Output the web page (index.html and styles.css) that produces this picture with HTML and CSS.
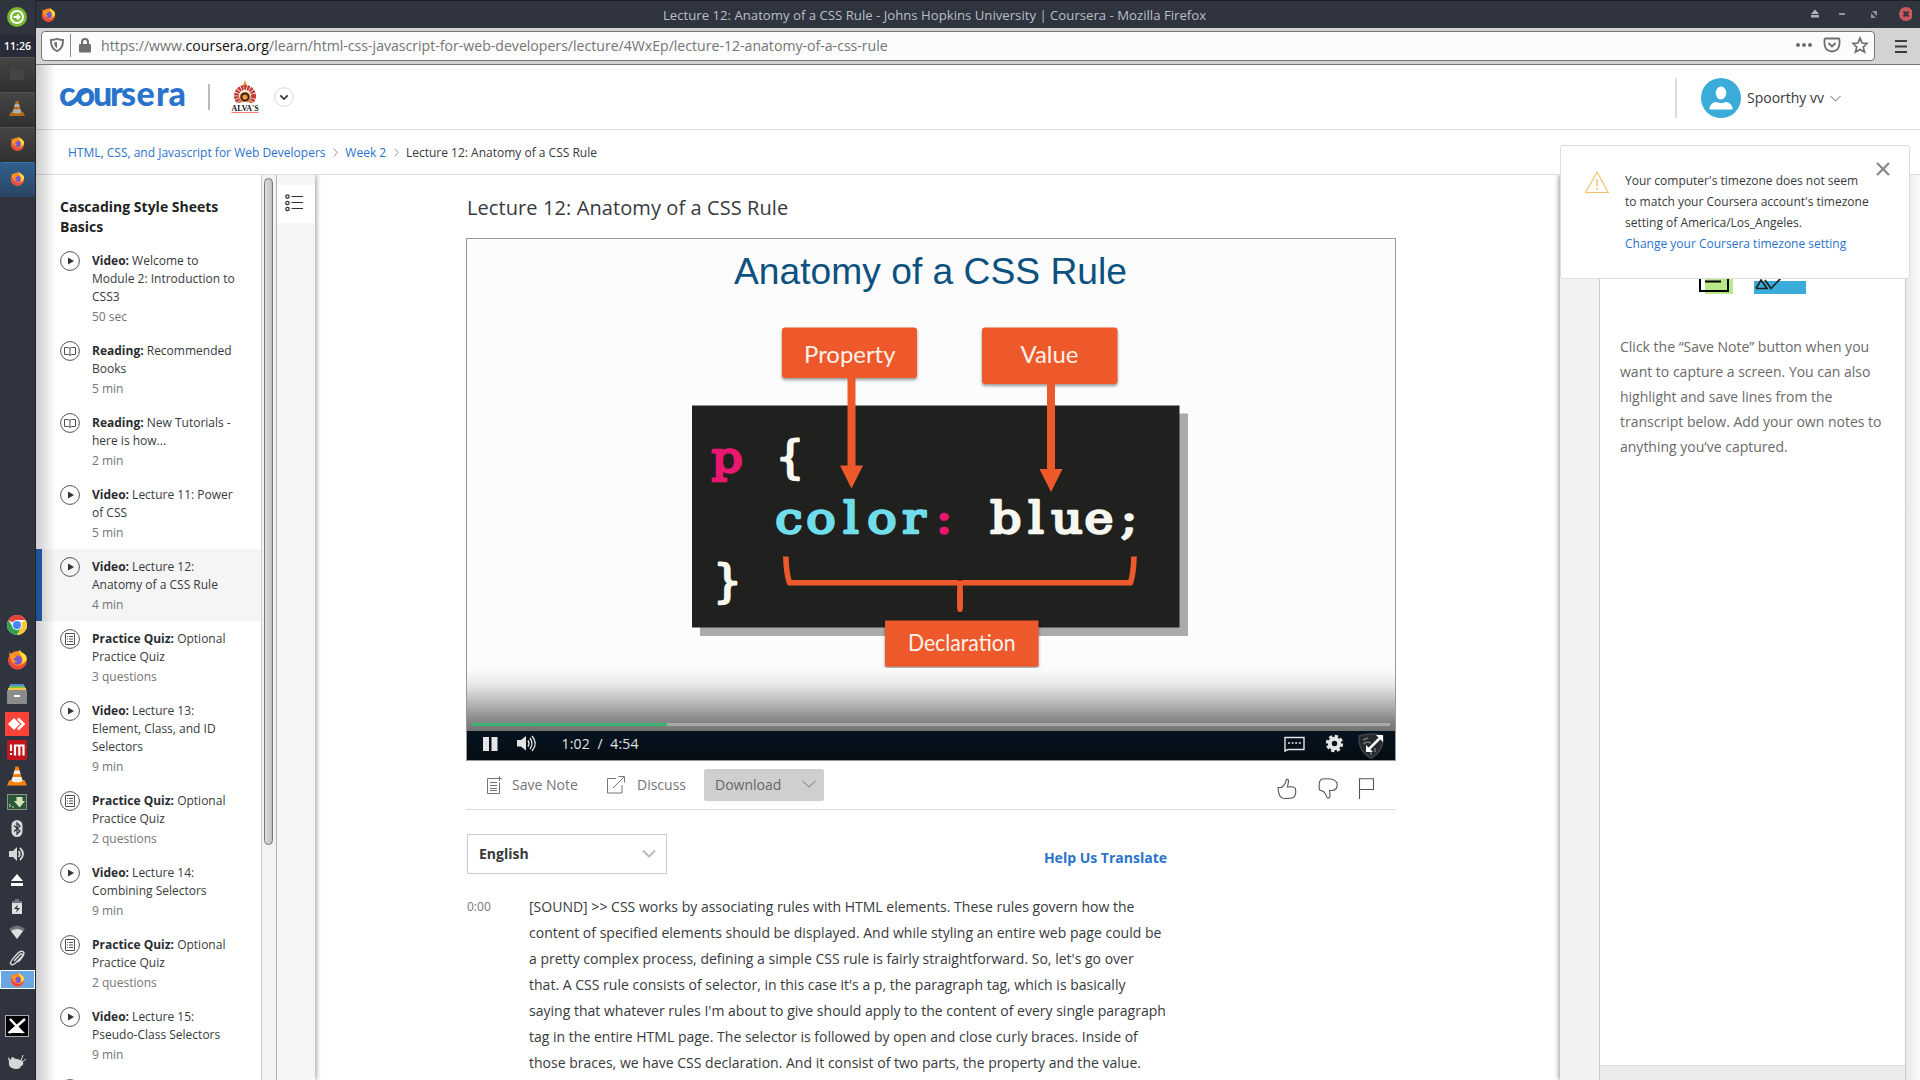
FILE: index.html
```html
<!DOCTYPE html>
<html lang="en">
<head>
<meta charset="utf-8">
<title>Lecture 12: Anatomy of a CSS Rule</title>
<link rel="stylesheet" href="styles.css">
</head>
<body>
<svg class="defs" width="0" height="0">
  <symbol id="fox" viewBox="0 0 20 20">
    <circle cx="10" cy="10.8" r="8.8" fill="#ff8a1f"/>
    <path d="M2 7Q0.500 14 5 17.500Q10 21 15 17.800Q18.500 15 18.800 11Q14 18 8 15.500Q3 13 4.500 8Z" fill="#f4433c"/>
    <path d="M11.500 0.500Q11 4 14 7Q16 10 13.500 14Q19 12 18.800 8.500Q18.500 5.500 16 4.500Q13 3 11.500 0.500Z" fill="#ffde3a"/>
    <circle cx="10" cy="10.600" r="4.300" fill="#7a55d0"/>
    <path d="M2 3L5 5.500L9.500 6.500Q8.500 8.500 6.500 9Q7 12 10 12Q7 14 4.500 11.500Q2 8 2 3Z" fill="#ff9a24"/>
  </symbol>
  <symbol id="cone" viewBox="0 0 20 20">
    <path d="M8.500 0.500H11.500L15.500 15H4.500Z" fill="#f98208"/>
    <path d="M7.500 4.500H12.500L13.600 8H6.400ZM5.500 11H14.500L15.500 14H4.500Z" fill="#eee"/>
    <path d="M2.500 14H17.500L20 19.500H0Z" fill="#f98208"/><ellipse cx="10" cy="14.500" rx="5.500" ry="1.800" fill="#eee"/>
  </symbol>
  <symbol id="play" viewBox="0 0 20 20"><circle cx="10" cy="10" r="9.400" fill="none" stroke="#525252"/><path d="M8 6.500V13.500L14 10Z" fill="#2f3438"/></symbol>
  <symbol id="book" viewBox="0 0 20 20"><circle cx="10" cy="10" r="9.400" fill="none" stroke="#525252"/><path d="M4.500 6.500H8.500L10 7.500L11.500 6.500H15.500V13.500H11.500L10 14.500L8.500 13.500H4.500ZM10 7.500V14" fill="none" stroke="#525252"/></symbol>
  <symbol id="quiz" viewBox="0 0 20 20"><circle cx="10" cy="10" r="9.400" fill="none" stroke="#525252"/><path d="M5.500 4.500H14.500V15.500H5.500Z" fill="none" stroke="#525252"/><path d="M9 7.500H13M9 10H13M9 12.500H13M7 7.500H8M7 10H8M7 12.500H8" stroke="#525252"/></symbol>
</svg>
<div class="desktop">
  <aside class="dock">
    <div class="start"><svg width="20" height="20"><circle cx="10" cy="10" r="10" fill="#76b82f"/><circle cx="10" cy="10" r="6" fill="none" stroke="#fff" stroke-width="2"/><path d="M6.500 10H12M10 7.500L12.500 10L10 12.500" stroke="#fff" stroke-width="1.800" fill="none"/></svg></div>
    <div class="clock">11:26</div>
    <div class="task"><svg width="14" height="14"><path d="M0 1H5L7 3H14V13H0Z" fill="#444"/></svg></div>
    <div class="task dim"><svg width="16" height="17"><use href="#cone"/></svg></div>
    <div class="task"><svg width="15" height="15"><use href="#fox"/></svg></div>
    <div class="task current"><svg width="15" height="15"><use href="#fox"/></svg></div>
    <div class="tray">
      <div class="t35"><svg width="20" height="20"><circle cx="10" cy="10" r="10" fill="#fff"/><path d="M10 10L1.340 5A10 10 0 0 1 18.660 5H10Z" fill="#e3443a"/><path d="M10 10L18.660 5A10 10 0 0 1 10 20L14 12Z" fill="#fcc934"/><path d="M1.340 5A10 10 0 0 0 10 20L14 12L10 14L6 12Z" fill="#36a152"/><circle cx="10" cy="10" r="5" fill="#fff"/><circle cx="10" cy="10" r="4" fill="#4285f4"/></svg></div>
      <div class="t34"><svg width="21" height="21"><use href="#fox"/></svg></div>
      <div class="t35"><svg width="20" height="20"><path d="M3 0H17V3H3Z" fill="#4a90d9"/><path d="M2 2H18V5H2Z" fill="#7cc04b"/><path d="M1 4H19V7H1Z" fill="#f5c64a"/><rect y="6" width="20" height="14" rx="1" fill="#8b8b8b"/><path d="M7 11H13V13H7Z" fill="#fff"/></svg></div>
      <div class="t26"><svg width="24" height="24"><path d="M0 0H24V24H0Z" fill="#ff4238"/><path d="M3 12L9 6L15 12L9 18Z" fill="#fff"/><path d="M13 6.500L18.500 12L13 17.500" fill="none" stroke="#fff" stroke-width="2.500"/></svg></div>
      <div class="t26"><svg width="20" height="20"><rect width="20" height="20" rx="2" fill="#c4141c"/><path d="M4 4.500V11M4 13V15M8 15.500V5.500H16.500V15.500M12.300 5.500V15.500" fill="none" stroke="#fff" stroke-width="2.200"/></svg></div>
      <div class="t26"><svg width="20" height="20"><use href="#cone"/></svg></div>
      <div class="t26"><svg width="20" height="16"><rect x=".5" y=".5" width="19" height="15" fill="#2b5738" stroke="#8c948c"/><path d="M9.500 3H15.500V7H18L12.500 13.500L7 7H9.500Z" fill="#d6e4ba"/><path d="M2 10L4 11.500L2 13M5 13H7" stroke="#ccc" fill="none"/></svg></div>
      <div class="t26"><svg width="12" height="17"><rect x=".5" width="11" height="17" rx="5.500" fill="#d8d8d8"/><path d="M3 5.500L9 11L6 14V3L9 6L3 11.500" fill="none" stroke="#2f343f" stroke-width="1.200"/></svg></div>
      <div class="t26"><svg width="16" height="16"><path d="M0 5H4L8 1V15L4 11H0Z" fill="#d8d8d8"/><path d="M9.500 5Q12 8 9.500 11M11 2Q17 8 11 14" stroke="#d8d8d8" stroke-width="1.800" fill="none"/></svg></div>
      <div class="t26"><svg width="12" height="12"><path d="M6 0L12 7H0ZM0 9H12V12H0Z" fill="#fff"/></svg></div>
      <div class="t26"><svg width="10" height="15"><path d="M0 2H3V0H7V2H10V5H0Z" fill="#6f737b"/><path d="M0 4H10V15H0Z" fill="#dedede"/><path d="M6 5.500L2 10H5L4 13.500L8 9H5Z" fill="#2f343f"/></svg></div>
      <div class="t26"><svg width="16" height="14"><path d="M0 4Q8 -3 16 4L8 14Z" fill="#6f737b"/><path d="M2 6Q8 2 14 6L8 14Z" fill="#dedede"/></svg></div>
      <div class="t25"><svg width="16" height="16"><path d="M5 11L11 4.500Q13 3 13.500 5Q14 6 6 13.500Q3 16 1.500 13.500Q0.500 12 9 3Q12 0 14.500 2Q16.500 4.500 9 12" fill="none" stroke="#d8d8d8" stroke-width="1.500"/></svg></div>
      <div class="running"><svg width="15" height="15"><use href="#fox"/></svg></div>
      <div class="t74"><svg width="24" height="22"><rect x=".5" y=".5" width="23" height="21" stroke="#aaa"/><path d="M4 18L20 4M5 4L18 18" stroke="#fff" stroke-width="2.500"/><path d="M2.500 18L9 12L12 12L20 18Z" fill="#fff"/></svg></div>
      <div class="t35"><svg width="18" height="16"><path d="M0 3L3 6Q3 3 5 3Q6 5 9 5Q12 5 15 8Q16 11 13 12L12 14Q8 16 4 14Q0 12 1 8Z" fill="#d8d8d8"/><path d="M13 7L15 1M14 8L18 5" stroke="#d8d8d8"/></svg></div>
    </div>
  </aside>

  <div class="window">
    <div class="titlebar">
      <svg class="app" width="15" height="15"><use href="#fox"/></svg>
      <span class="wtitle">Lecture 12: Anatomy of a CSS Rule - Johns Hopkins University | Coursera - Mozilla Firefox</span>
      <svg class="wbtns" width="106" height="16"><path d="M5 7L9 2.500L13 7ZM5 8H13V10.500H5Z" fill="#aeb2ba"/><path d="M33 6H39V8H33Z" fill="#8f949e"/><path d="M66 4H71V9ZM65 6V11H70Z" fill="#8f949e"/><circle cx="100" cy="7" r="7" fill="#cc575d"/><path d="M97.500 4.500L102.500 9.500M102.500 4.500L97.500 9.500" stroke="#2f343f" stroke-width="2"/></svg>
    </div>
    <div class="toolbar">
      <div class="urlbar">
        <svg class="shield" width="14" height="14"><path d="M1 2Q5 2 7 0.800Q9 2 13 2Q13.500 10 7 13.200Q0.500 10 1 2Z" fill="none" stroke="#6e6e6e" stroke-width="1.800"/><path d="M7 4V10.500Q4 8 4 4.500Z" fill="#6e6e6e"/></svg>
        <svg class="lock" width="12" height="15"><rect y="6" width="12" height="8.500" rx="1" fill="#6e6e6e"/><path d="M3 7V4Q3 1 6 1T9 4V7" fill="none" stroke="#6e6e6e" stroke-width="2"/></svg>
        <span class="url">https://www.<b>coursera.org</b>/learn/html-css-javascript-for-web-developers/lecture/4WxEp/lecture-12-anatomy-of-a-css-rule</span>
        <svg class="acts" width="74" height="18"><g fill="#6e6e6e"><circle cx="3" cy="9" r="2"/><circle cx="9" cy="9" r="2"/><circle cx="15" cy="9" r="2"/></g><path d="M30.500 2.500H43.500Q44.500 2.500 44.500 4V8Q44 15 37 15.500Q30 15 29.500 8V4Q29.500 2.500 30.500 2.500ZM33.500 7L37 10.500L40.500 7" fill="none" stroke="#6e6e6e" stroke-width="1.800"/><path d="M65 2L67 7L72 7.500L68.300 11L69.500 16L65 13.400L60.500 16L61.700 11L58 7.500L63 7Z" fill="none" stroke="#6e6e6e" stroke-width="1.700"/></svg>
      </div>
      <svg class="burger" width="12" height="13"><path d="M0 1H12M0 6.500H12M0 12H12" stroke="#3c3c3c" stroke-width="2"/></svg>
    </div>

    <div class="page">
      <header class="header">
        <svg class="brand" width="128" height="22"><text x="-1 15.5 33 50 61 76.5 96 108.5" y="20">coursera</text><path d="M9 17.500Q15 16 18 11T28 4.500" fill="none" stroke="#2a73cc" stroke-width="4.500"/></svg>
        <span class="bar"></span>
        <svg class="alvas" width="28" height="34"><path d="M14 0L16.500 7H11.500Z" fill="#ef8a2c"/><circle cx="14" cy="16" r="8.500" fill="none" stroke="#c23a34" stroke-width="5" stroke-dasharray="2.300 .7"/><circle cx="14" cy="17" r="5.500" fill="#f0a040"/><circle cx="14" cy="17" r="3.600" fill="none" stroke="#3a2018" stroke-width="2"/><path d="M4 24Q14 20 24 24V27H4Z" fill="#fff"/><text x="0.500" y="30.500" textLength="27" lengthAdjust="spacingAndGlyphs">ALVA'S</text><path d="M.5 32.500H27.500" stroke="#ef7a78"/></svg>
        <svg class="more" width="20" height="20"><circle cx="10" cy="10" r="9.300" fill="#fff" stroke="#d8d8d8"/><path d="M6.300 8.300L10 12L13.700 8.300" fill="none" stroke="#333" stroke-width="1.700"/></svg>
        <div class="user">
          <svg width="40" height="40"><circle cx="20" cy="20" r="20" fill="#3bacda"/><ellipse cx="20" cy="15" rx="5.300" ry="6.500" fill="#fff"/><path d="M8.500 31.500Q8.500 25 15 24Q20 26 25 24Q31.500 25 31.500 31.500Z" fill="#fff"/></svg>
          <span class="uname">Spoorthy vv</span>
          <svg width="11" height="7"><path d="M.5 1L5.500 6L10.500 1" fill="none" stroke="#666"/></svg>
        </div>
      </header>
      <nav class="crumbs">
        <a>HTML, CSS, and Javascript for Web Developers</a>
        <svg width="5" height="9"><path d="M.7 .5L4.200 4.500L.7 8.500" fill="none" stroke="#999"/></svg>
        <a>Week 2</a>
        <svg width="5" height="9"><path d="M.7 .5L4.200 4.500L.7 8.500" fill="none" stroke="#999"/></svg>
        <span>Lecture 12: Anatomy of a CSS Rule</span>
      </nav>

      <div class="body">
        <section class="lessons">
          <h2>Cascading Style Sheets<br>Basics</h2>
          <div class="item"><svg><use href="#play"/></svg><div><b>Video:</b> Welcome to<br>Module 2: Introduction to<br>CSS3<small>50 sec</small></div></div>
          <div class="item"><svg><use href="#book"/></svg><div><b>Reading:</b> Recommended<br>Books<small>5 min</small></div></div>
          <div class="item"><svg><use href="#book"/></svg><div><b>Reading:</b> New Tutorials -<br>here is how...<small>2 min</small></div></div>
          <div class="item"><svg><use href="#play"/></svg><div><b>Video:</b> Lecture 11: Power<br>of CSS<small>5 min</small></div></div>
          <div class="item active"><svg><use href="#play"/></svg><div><b>Video:</b> Lecture 12:<br>Anatomy of a CSS Rule<small>4 min</small></div></div>
          <div class="item"><svg><use href="#quiz"/></svg><div><b>Practice Quiz:</b> Optional<br>Practice Quiz<small>3 questions</small></div></div>
          <div class="item"><svg><use href="#play"/></svg><div><b>Video:</b> Lecture 13:<br>Element, Class, and ID<br>Selectors<small>9 min</small></div></div>
          <div class="item"><svg><use href="#quiz"/></svg><div><b>Practice Quiz:</b> Optional<br>Practice Quiz<small>2 questions</small></div></div>
          <div class="item"><svg><use href="#play"/></svg><div><b>Video:</b> Lecture 14:<br>Combining Selectors<small>9 min</small></div></div>
          <div class="item"><svg><use href="#quiz"/></svg><div><b>Practice Quiz:</b> Optional<br>Practice Quiz<small>2 questions</small></div></div>
          <div class="item"><svg><use href="#play"/></svg><div><b>Video:</b> Lecture 15:<br>Pseudo-Class Selectors<small>9 min</small></div></div>
          <div class="item"><svg><use href="#quiz"/></svg></div>
        </section>
        <div class="scroll"><div class="thumb"></div></div>
        <div class="rail"><div class="tab"><svg width="18" height="18"><g fill="none" stroke="#333" stroke-width="1.200"><circle cx="2.500" cy="2.500" r="1.700"/><circle cx="2.500" cy="9" r="1.700"/><circle cx="2.500" cy="15" r="1.700"/><path d="M6.500 2.500H18M6.500 8.500H18M6.500 14.500H18"/></g></svg></div></div>

        <main class="main">
          <h1>Lecture 12: Anatomy of a CSS Rule</h1>
          <div class="player">
            <svg class="slide" width="928" height="521" viewBox="467 239 928 521">
              <defs><linearGradient id="fade" x1="0" y1="0" x2="0" y2="1"><stop offset="0" stop-color="#fcfcfc"/><stop offset=".25" stop-color="#eaeaea"/><stop offset=".55" stop-color="#b9b9b9"/><stop offset=".8" stop-color="#8c8c8c"/><stop offset="1" stop-color="#727472"/></linearGradient>
              <linearGradient id="panel" x1="0" y1="0" x2="0" y2="1"><stop offset="0" stop-color="#05131f"/><stop offset="1" stop-color="#050d14"/></linearGradient></defs>
              <path d="M467 239H1395V760H467Z" fill="#fcfcfc"/>
              <text class="s-title" x="734" y="283.500" textLength="393" lengthAdjust="spacingAndGlyphs">Anatomy of a CSS Rule</text>
              <path d="M700 413.500H1188V636H700Z" fill="#aaa"/>
              <path d="M692 405.500H1179.500V627.500H692Z" fill="#20211e"/>
              <g class="s-box">
                <rect x="782" y="327.500" width="135" height="50.500" rx="3"/><rect x="982" y="327.500" width="135.500" height="56.500" rx="3"/><rect x="885" y="620.500" width="153.500" height="46" rx="1"/>
              </g>
              <path d="M847.500 377H855.500V465.500H863L851.500 488.500L840 465.500H847.500ZM1047 383H1055V469H1062.500L1051 492L1039.500 469H1047Z" fill="#ee592c"/>
              <path d="M785.800 556.500Q786.300 574 789.500 582.800H957Q960 583 960 588V609M1134 556.500Q1133.500 574 1130.500 582.800H963Q960 583 960 588" fill="none" stroke="#ee592c" stroke-width="5.600" stroke-linecap="butt" stroke-linejoin="round"/>
              <path d="M957 590H963L962.500 611Q960 613 957.500 611Z" fill="#ee592c"/>
              <g class="s-label">
                <text x="804" y="363" textLength="91.500" lengthAdjust="spacingAndGlyphs">Property</text>
                <text x="1020.500" y="363" textLength="58" lengthAdjust="spacingAndGlyphs">Value</text>
                <text x="908" y="650.500" textLength="107.500" lengthAdjust="spacingAndGlyphs">Declaration</text>
              </g>
              <g class="s-code" transform="scale(1.15 1)">
                <text x="632.2" y="472" class="pink">p</text>
                <text x="686.1 713.9 740 767 794.8" y="533" class="cyan">color</text>
                <text x="820.9" y="533" class="pink">:</text>
                <text x="874.8 900.9 927.8 955.7 981.7" y="533" class="white">blue;</text>
              </g>
              <g class="s-code brace">
                <text x="790" y="473" class="white">{</text>
                <text x="727.500" y="597" class="white">}</text>
              </g>
              <path d="M467 668H1395V731H467Z" fill="url(#fade)"/>
              <path d="M467 731H1395V760H467Z" fill="url(#panel)"/>
              <path d="M472 723H1390V726H472Z" fill="#a8a8a8"/>
              <path d="M472 723H667V726H472Z" fill="#3cb371"/>
              <g fill="#e4e4e4"><path d="M483 737H489V751H483ZM491.500 737H497.500V751H491.500Z"/><path d="M517 740H521L526 736V750.500L521 746.500H517Z"/></g>
              <path d="M528 740.500Q530 743.500 528 746.500M530 738Q534 743.500 530 749M532 736Q538.500 743.500 532 751" fill="none" stroke="#e4e4e4" stroke-width="1.400"/>
              <text class="time" x="561.500" y="749" textLength="77" xml:space="preserve">1:02&#160; /&#160; 4:54</text>
              <path d="M1285 737.500H1304V749.500H1288L1285 751Z" fill="none" stroke="#e4e4e4" stroke-width="1.400"/><path d="M1288 743H1301" stroke="#e4e4e4" stroke-width="1.500" stroke-dasharray="2 1.600"/>
              <circle cx="1334.500" cy="743.500" r="4.700" fill="none" stroke="#e4e4e4" stroke-width="4"/><circle cx="1334.500" cy="743.500" r="7.400" fill="none" stroke="#e4e4e4" stroke-width="2.600" stroke-dasharray="3.400 2.410"/>
              <path d="M1359 736Q1371 732 1383 736Q1384 751 1371 758Q1358 751 1359 736Z" fill="#25292e" stroke="#3f4347" stroke-width="1.500"/><path d="M1363 740L1368 738M1363 744Q1367 741 1371 743M1371 751V755M1375 748V752" stroke="#777" stroke-width="1.500"/>
              <path d="M1369 749L1380 738" stroke="#fff" stroke-width="2.500"/><path d="M1376 735H1383V742ZM1366 745V752H1373Z" fill="#fff"/>
            </svg>
          </div>
          <div class="actions">
            <svg width="15" height="18"><path d="M10 2.500H.5V17.500H12.500V6.500M3 6.500H10M3 9.500H10M3 12.500H10M3 14.500H10M12.500 0V5M10 2.500H15" fill="none" stroke="#757575"/></svg>
            <span class="save">Save Note</span>
            <svg width="18" height="18"><path d="M9 2.500H.5V17H15V9M6 12L17 1M11.500 .5H17.500V6.500" fill="none" stroke="#757575"/></svg>
            <span class="disc">Discuss</span>
            <button>Download<svg width="14" height="8"><path d="M.5 1L7 7L13.500 1" fill="none" stroke="#757575"/></svg></button>
            <svg class="votes" width="98" height="22"><g fill="none" stroke="#555" stroke-width="1.100"><path d="M1 9.500H4.500Q9 6 9.300 1.500Q11.500 .5 11.500 3.500L10.500 9Q18 8 18.500 11Q19.500 17 16.500 19.500Q14 20.500 7 20.500Q1.500 20.500 1 9.500Z"/><path d="M45 1Q58 -.5 60 5Q61 12 55 12.500H52.500Q53.500 18 52.500 19.500Q50 21.500 49 17Q47.500 13 42.500 12Q41 3 45 1Z"/><path d="M82.500 21V.8H96.500V11.500H82.500"/></g></svg>
          </div>
          <div class="langrow">
            <div class="select">English<svg width="14" height="9"><path d="M1 1.500L7 7.500L13 1.500" fill="none" stroke="#bbb" stroke-width="2"/></svg></div>
            <a class="help">Help Us Translate</a>
          </div>
          <div class="transcript">
            <span class="ts">0:00</span>
            <p>[SOUND] &gt;&gt; CSS works by associating rules with HTML elements. These rules govern how the<br>content of specified elements should be displayed. And while styling an entire web page could be<br>a pretty complex process, defining a simple CSS rule is fairly straightforward. So, let's go over<br>that. A CSS rule consists of selector, in this case it's a p, the paragraph tag, which is basically<br>saying that whatever rules I'm about to give should apply to the content of every single paragraph<br>tag in the entire HTML page. The selector is followed by open and close curly braces. Inside of<br>those braces, we have CSS declaration. And it consist of two parts, the property and the value.</p>
          </div>
        </main>

        <aside class="notes">
          <div class="gutter"></div>
          <div class="notebody">
            <svg width="110" height="20"><path d="M6 0H34V15H6Z" fill="#b8e986"/><path d="M1 0V12H29V0M6 2.500H22" fill="none" stroke="#000" stroke-width="2"/><path d="M55 2H107V15H55Z" fill="#3bacda"/><path d="M57 9.500L62 1L68 9.500H57M66 1L72 9.500L82 -1" fill="none" stroke="#222" stroke-width="1.700"/></svg>
            <p>Click the “Save Note” button when you<br>want to capture a screen. You can also<br>highlight and save lines from the<br>transcript below. Add your own notes to<br>anything you’ve captured.</p>
            <div class="hscroll"></div>
          </div>
          <div class="edge"></div>
        </aside>
      </div>
      <div class="toast">
        <svg class="warn" width="24" height="23"><path d="M12 1L23.300 21.500H.7Z" fill="none" stroke="#f5c26b" stroke-width="1.200"/><path d="M12 8V15M12 17V19" stroke="#f5c26b" stroke-width="1.500"/></svg>
        <p>Your computer's timezone does not seem<br>to match your Coursera account's timezone<br>setting of America/Los_Angeles.<br><a>Change your Coursera timezone setting</a></p>
        <svg class="close" width="14" height="14"><path d="M1 1L13 13M13 1L1 13" stroke="#888" stroke-width="2.200"/></svg>
      </div>
      <div class="leftshade"></div>
    </div>
  </div>
</div>
</body>
</html>
```
FILE: styles.css
```css
* { box-sizing: border-box; }
body { margin: 0; font-family: "Open Sans", "Noto Sans", sans-serif; color: #373a3c; background: #fff; }
.defs { position: absolute; }
svg { display: block; flex: none; }
.desktop { display: flex; width: 1920px; height: 1080px; overflow: hidden; }

/* dock */
.dock { width: 36px; flex: none; background: #2f343f; border-right: 1px solid #22252e; display: flex; flex-direction: column; }
.dock > div:not(.tray) { display: flex; align-items: center; justify-content: center; flex: none; }
.start { height: 35px; padding: 0 1px 1px 0; }
.clock { height: 22px; background: #272c38; color: #fff; font-size: 10.500px; font-weight: 600; }
.task { height: 35px; background: linear-gradient(#454545, #303030); border-top: 1px solid #555; border-radius: 2px; padding: 0 1px 3px 0; }
.dim svg { opacity: .65; }
.current { background: linear-gradient(#30608f, #2b4561); border-top-color: #3a75ad; }
.tray { margin-top: auto; height: 473px; }
.tray > div { display: flex; align-items: center; justify-content: center; padding-right: 1px; }
.t35 { height: 35px; }
.t34 { height: 34px; }
.t26 { height: 26px; }
.t25 { height: 25px; }
.t74 { height: 55px; padding-top: 18px; }
.running { height: 19px; background: #6aa5e4; border: 1px solid #fff; }

/* browser chrome */
.window { flex: 1; display: flex; flex-direction: column; }
.titlebar { height: 28px; background: #2f343f; border-top: 1px solid #1d2028; display: flex; align-items: center; padding: 0 8px 0 5px; color: #b9bfc9; }
.wtitle { flex: 1; text-align: center; font-size: 13.180px; padding-left: 7px; }
.toolbar { height: 37px; background: #d3d3d3; border-bottom: 1px solid #777; display: flex; align-items: center; padding: 0 13px 0 5px; justify-content: space-between; }
.urlbar { width: 1834px; height: 30px; margin-top: -1px; background: #fcfcfc; border: 1px solid #777; border-radius: 4px; display: flex; align-items: center; padding: 0 5px 1px 8px; }
.shield { margin-right: 6px; }
.lock { box-sizing: content-box; border-left: 1px solid #888; padding: 4px 10px 4px 8px; }
.url { flex: 1; font-size: 14.100px; color: #757575; white-space: nowrap; }
.url b { color: #111; font-weight: 400; }

/* site header */
.page { position: relative; flex: 1; display: flex; flex-direction: column; background: #fff; overflow: hidden; }
.header { height: 65px; flex: none; border-bottom: 1px solid #ddd; display: flex; align-items: center; padding: 0 79px 0 24px; }
.brand, .alvas { overflow: visible; }
.brand text { font: 900 34px Lato, sans-serif; fill: #2a73cc; }
.bar { width: 2px; height: 26px; background: #bbb; margin: 0 21px 0 20px; }
.alvas text { font: 700 9px "Liberation Serif", serif; fill: #111; }
.more { margin-left: 15px; }
.user { margin-left: auto; display: flex; align-items: center; gap: 6px; height: 40px; border-left: 2px solid #ddd; padding-left: 24px; font-size: 14px; margin-top: 2px; }
.uname { padding-bottom: 2px; }
.crumbs { height: 45px; flex: none; border-bottom: 1px solid #ddd; padding-left: 32px; display: flex; align-items: center; gap: 7.400px; font-size: 12px; }
a { color: #2a73cc; }
.body { flex: 1; display: flex; min-height: 0; overflow: hidden; }

/* lesson list */
.lessons { width: 225px; flex: none; overflow: hidden; padding-top: 22px; }
h2 { font-size: 14px; line-height: 20px; margin: 0 0 6px 24px; color: #1f1f1f; }
.item { display: flex; gap: 12px; padding: 9px 0 7px 24px; font-size: 12px; line-height: 18px; }
.item > svg { width: 20px; height: 20px; margin-top: -1px; }
.item b { color: #2a2d30; }
.item small { display: block; font-size: 12px; margin-top: 2px; color: #757575; }
.active { background: #f5f5f5; border-left: 6px solid #2265b9; padding-left: 18px; }
.scroll { width: 16px; flex: none; border-left: 1px solid #ccc; border-right: 1px solid #bbb; padding: 3px 2px; background: #f3f3f3; }
.thumb { height: 667px; width: 9px; border: 1px solid #777; border-radius: 5px; background: linear-gradient(90deg, #ddd, #bfbfbf); }
.rail { width: 38px; flex: none; background: #f5f5f5; padding-top: 10px; box-shadow: 2px 0 4px rgba(0,0,0,.3); }
.tab { height: 38px; background: #fff; padding: 9px 0 0 8px; }

/* lecture */
.main { width: 930px; flex: none; margin-left: 151px; }
h1 { font-size: 20px; font-weight: 400; line-height: 28px; margin: 19px 0 16px 1px; color: #373a3c; letter-spacing: .09px; }
.player { height: 523px; border: 1px solid #999; }
.s-title { font: 37.500px "Liberation Sans", sans-serif; fill: #0c5180; }
.s-box { fill: #ee592c; filter: drop-shadow(0 2px 1.500px rgba(0,0,0,.4)); }
.s-label { font: 23px Lato, sans-serif; fill: #fdf1ea; }
.s-code { font: 42.500px "DejaVu Serif", serif; text-anchor: middle; stroke-width: 2.500px; stroke-linejoin: round; }
.pink { fill: #e9176f; stroke: #e9176f; }
.cyan { fill: #70deea; stroke: #70deea; }
.white { fill: #f7f7f2; stroke: #f7f7f2; }
.brace { font-size: 44px; }
.time { font-size: 14px; fill: #e4e4e4; }
.actions { height: 49px; border-bottom: 1px solid #ddd; display: flex; align-items: center; padding-left: 21px; font-size: 14px; color: #757575; }
.save { width: 86px; margin: 0 9px 2px 10px; }
.disc { width: 67px; margin: 0 0 2px 12px; }
.actions button { width: 120px; height: 32px; border: 0; border-radius: 2px; background: #cfcfcf; font: inherit; color: #666; display: flex; align-items: center; justify-content: space-between; padding: 0 8px 2px 11px; }
.actions .votes { margin: 8px 21px 0 auto; }
.langrow { display: flex; justify-content: space-between; align-items: center; width: 701px; padding-top: 24px; font-size: 14px; font-weight: 700; }
.select { width: 200px; height: 40px; border: 1px solid #ccc; display: flex; align-items: center; justify-content: space-between; padding: 0 10px 1px 11px; margin-left: 1px; }
.help { margin-top: 7px; }
.transcript { display: flex; margin-top: 20px; font-size: 14px; line-height: 26px; white-space: nowrap; letter-spacing: .012px; }
.ts { width: 63px; padding-left: 1px; font-size: 12px; color: #757575; }
p { margin: 0; }

/* notes */
.notes { margin-left: auto; width: 360px; flex: none; display: flex; box-shadow: -2px 0 4px rgba(0,0,0,.3); }
.gutter { width: 40px; background: #f2f2f2; border-right: 1px solid #ccc; }
.notebody { width: 305px; display: flex; flex-direction: column; padding-top: 104px; }
.notebody svg { margin-left: 99px; }
.notebody p { margin: 35px 0 0 20px; font-size: 14px; line-height: 25px; color: #6a6a6a; white-space: nowrap; }
.hscroll { margin-top: auto; height: 15px; background: #ececec; border-top: 1px solid #ddd; }
.edge { flex: 1; border-left: 1px solid #ccc; background: linear-gradient(90deg, #e8e8e8, #fafafa); }

/* floating layers */
.toast { position: absolute; left: 1524px; top: 80px; width: 350px; height: 134px; background: #fff; border: 1px solid #ddd; border-radius: 3px; padding: 24px 19px 0 24px; display: flex; font-size: 12px; line-height: 21px; white-space: nowrap; }
.warn { margin: 1px 16px 0 0; }
.close { margin: -8px 0 0 auto; }
.leftshade { position: absolute; left: 0; top: 0; bottom: 0; width: 20px; background: linear-gradient(90deg, rgba(0,0,0,.2), transparent); }
```
